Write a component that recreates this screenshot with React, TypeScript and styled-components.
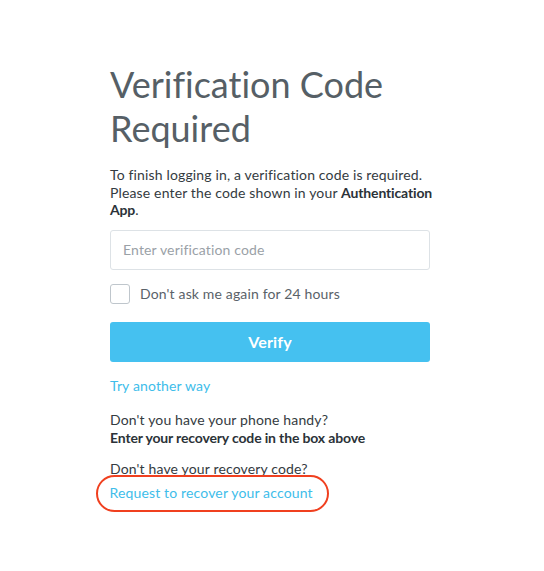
import React from 'react';
import styled, { createGlobalStyle } from 'styled-components';

const GlobalStyle = createGlobalStyle`
	html, body {
		margin: 0;
		padding: 0;
		background: #ffffff;
	}
	body {
		font-family: Lato, 'Open Sans', Arial, sans-serif;
		font-variant-ligatures: none;
	}
`;

const Page = styled.div`
	width: 544px;
	height: 571px;
	box-sizing: border-box;
	padding: 62px 0 0 110px;
`;

const Panel = styled.div`
	width: 320px;
	display: flex;
	flex-direction: column;
	letter-spacing: 0.15px;
`;

const Title = styled.h1`
	margin: 0;
	font-size: 36px;
	line-height: 44px;
	font-weight: 400;
	letter-spacing: 0;
	color: #565f66;
`;

const Intro = styled.p`
	margin: 16px -6px 0 0;
	font-size: 14px;
	line-height: 17.5px;
	letter-spacing: 0.15px;
	color: #343b41;
`;

const Strong = styled.strong`
	font-weight: 700;
	letter-spacing: -0.15px;
	color: #2b3238;
`;

const CodeInput = styled.input`
	margin-top: 11px;
	height: 40px;
	box-sizing: border-box;
	border: 1px solid #dde2e6;
	border-radius: 3px;
	padding: 0 12px;
	font-family: inherit;
	font-size: 14px;
	letter-spacing: inherit;
	color: #343b41;
	outline: none;
	&::placeholder {
		color: #9aa1a7;
	}
`;

const CheckRow = styled.label`
	margin-top: 14px;
	display: flex;
	align-items: center;
	gap: 10px;
	font-size: 14px;
	color: #5a6269;
`;

const Box = styled.span`
	width: 18px;
	height: 18px;
	border: 1px solid #bfc6cc;
	border-radius: 3px;
	flex: none;
`;

const VerifyButton = styled.button`
	margin-top: 18px;
	height: 40px;
	border: none;
	border-radius: 3px;
	background: #45c1f0;
	color: #ffffff;
	font-family: inherit;
	font-size: 16px;
	font-weight: 700;
	letter-spacing: inherit;
`;

const Link = styled.a<{ circled?: boolean }>`
	font-size: 14px;
	line-height: 18px;
	color: #40bdea;
	text-decoration: none;
	align-self: flex-start;
	${p =>
		p.circled &&
		`
		margin: 0 0 0 -14px;
		padding: 7px 14px 8px 11.5px;
		border: 2.5px solid #f0401f;
		border-radius: 20px;
	`}
`;

const Block = styled.p<{ top: number }>`
	margin: ${p => p.top}px 0 0;
	font-size: 14px;
	line-height: 18px;
	color: #343b41;
`;

const TryLink = styled.div`
	margin-top: 15px;
	display: flex;
`;

const RecoverRow = styled.div`
	margin-top: -3px;
	display: flex;
`;

export default function App() {
	return (
		<>
			<GlobalStyle />
			<Page>
				<Panel>
					<Title>
						Verification Code
						<br />
						Required
					</Title>
					<Intro>
						To finish logging in, a verification code is required.
						<br />
						Please enter the code shown in your <Strong>Authentication</Strong>
						<br />
						<Strong>App</Strong>.
					</Intro>
					<CodeInput placeholder="Enter verification code" />
					<CheckRow>
						<Box />
						Don't ask me again for 24 hours
					</CheckRow>
					<VerifyButton>Verify</VerifyButton>
					<TryLink>
						<Link href="#">Try another way</Link>
					</TryLink>
					<Block top={16}>
						Don't you have your phone handy?
						<br />
						<Strong>Enter your recovery code in the box above</Strong>
					</Block>
					<Block top={13}>Don't have your recovery code?</Block>
					<RecoverRow>
						<Link href="#" circled>
							Request to recover your account
						</Link>
					</RecoverRow>
				</Panel>
			</Page>
		</>
	);
}
